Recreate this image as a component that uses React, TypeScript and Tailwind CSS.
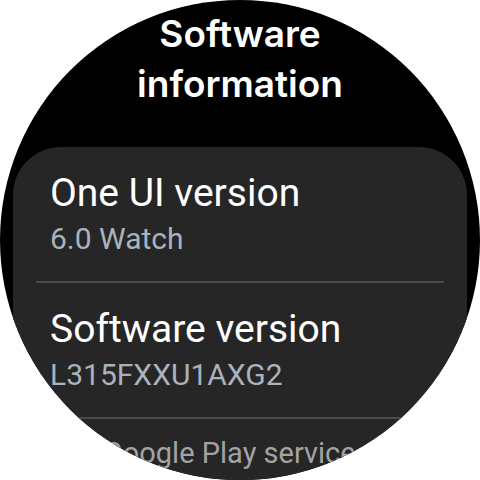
export default function App() {
  const items = [
    { label: "One UI version", value: "6.0 Watch" },
    { label: "Software version", value: "L315FXXU1AXG2" },
  ];

  return (
    <div className="flex h-[480px] w-[480px] items-center justify-center bg-white">
      <div className="h-[480px] w-[480px] overflow-hidden rounded-full bg-black">
        {/* page title */}
        <h1
          className="pt-[9px] text-center text-[37px] font-semibold leading-[50px] text-white"
          style={{ fontFamily: "Inter, 'Open Sans', sans-serif" }}
        >
          Software
          <br />
          information
        </h1>

        {/* list card */}
        <div
          className="mx-[13px] mt-[38px] rounded-[48px] bg-[#262626]"
          style={{ fontFamily: "Roboto, 'Liberation Sans', sans-serif" }}
        >
          {items.map((it) => (
            <div key={it.label}>
              <div className="px-[37px] pt-[24px] pb-[18px]">
                <div className="whitespace-nowrap text-[39px] leading-[44px] text-white">{it.label}</div>
                <div className="whitespace-nowrap text-[30px] leading-[48px] text-[#a9b3bd]">{it.value}</div>
              </div>
              <div className="mx-[23px] h-[2px] bg-[#4a4a4a]" />
            </div>
          ))}
          {/* last row is shrunk and faded at the bottom edge of the round screen */}
          <div className="pl-[90px] pt-[16px] pb-[20px]">
            <div className="whitespace-nowrap text-[29px] leading-[36px] text-[#a3a3a3]">Google Play services</div>
          </div>
        </div>
      </div>
    </div>
  );
}
